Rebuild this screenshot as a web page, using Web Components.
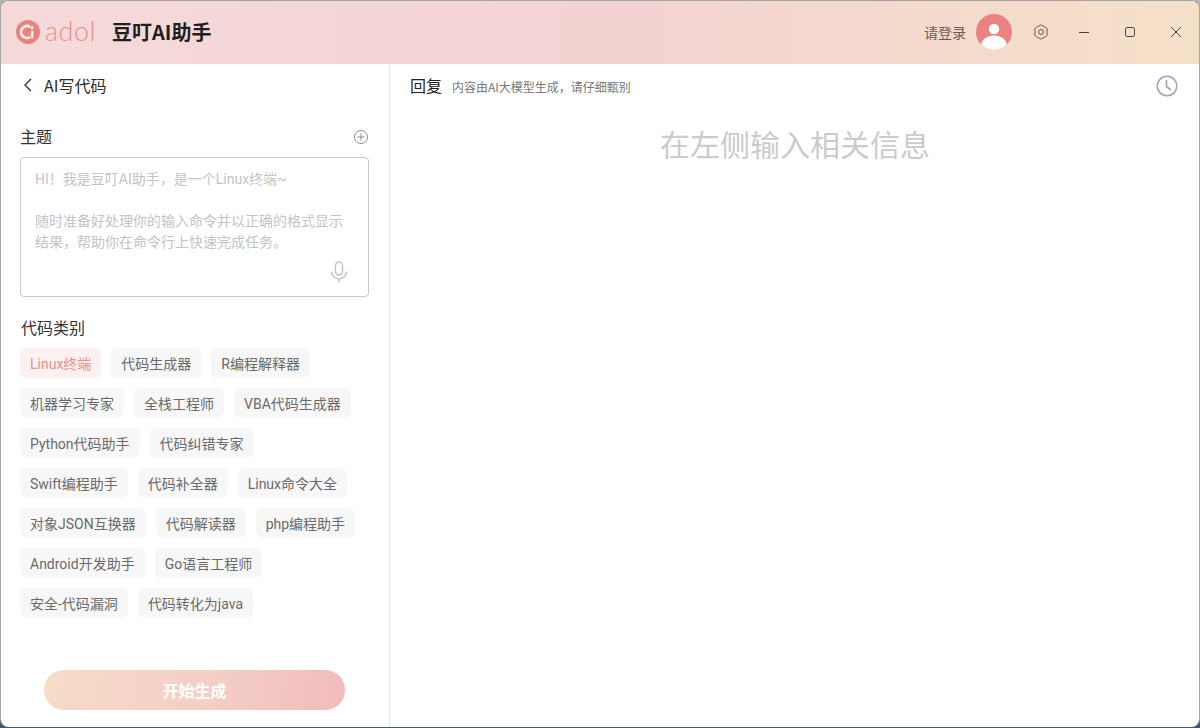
<!DOCTYPE html>
<html lang="zh">
<head>
<meta charset="utf-8">
<title>豆叮AI助手</title>
<style>
  html, body { margin: 0; padding: 0; height: 100%; overflow: hidden; }
  body { width: 1200px; height: 728px; background: #b5b5b5; font-family: "Noto Sans CJK SC", "Noto Sans", sans-serif; }
</style>
</head>
<body>
<app-window>
  <app-titlebar slot="top" app-title="豆叮AI助手" login="请登录"></app-titlebar>
  <side-panel slot="left" heading="AI写代码">
    <prompt-box label="主题">
      <p>HI！我是豆叮AI助手，是一个Linux终端~</p>
      <p>随时准备好处理你的输入命令并以正确的格式显示结果，帮助你在命令行上快速完成任务。</p>
    </prompt-box>
    <tag-group label="代码类别" tags="Linux终端,代码生成器,R编程解释器,机器学习专家,全栈工程师,VBA代码生成器,Python代码助手,代码纠错专家,Swift编程助手,代码补全器,Linux命令大全,对象JSON互换器,代码解读器,php编程助手,Android开发助手,Go语言工程师,安全-代码漏洞,代码转化为java" active="Linux终端"></tag-group>
    <start-button slot="footer">开始生成</start-button>
  </side-panel>
  <result-panel slot="right" heading="回复" note="内容由AI大模型生成，请仔细甄别" empty="在左侧输入相关信息"></result-panel>
</app-window>

<script>
class AppWindow extends HTMLElement {
  constructor() {
    super();
    this.attachShadow({ mode: "open" });
    this.shadowRoot.innerHTML = `
      <style>
        :host {
          display: block; width: 1200px; height: 728px;
          background: linear-gradient(#b5b5b5 700px, #3f5a6e 700px);
        }
        .win {
          height: 727px; box-sizing: border-box; padding: 1px 1px 0 1px;
          background: #a5a5a5; border-radius: 8px;
        }
        .inner {
          height: 726px; background: #fff; overflow: hidden;
          border-radius: 8px;
          display: flex; flex-direction: column;
        }
        .body { flex: 1; display: flex; min-height: 0; }
      </style>
      <div class="win"><div class="inner">
        <slot name="top"></slot>
        <div class="body">
          <slot name="left"></slot>
          <slot name="right"></slot>
        </div>
      </div></div>`;
  }
}

class AppTitlebar extends HTMLElement {
  constructor() {
    super();
    this.attachShadow({ mode: "open" });
  }
  connectedCallback() {
    const title = this.getAttribute("app-title") || "";
    const login = this.getAttribute("login") || "";
    this.shadowRoot.innerHTML = `
      <style>
        :host {
          display: flex; align-items: center; height: 63px; flex: none;
          box-sizing: border-box; padding-bottom: 1px;
          background: linear-gradient(90deg, #f6dadb 0%, #f3d2d2 50%, #f5e0c8 100%);
        }
        .logo { display: flex; align-items: center; margin-left: 15px; width: 96px; }
        .mark { width: 24px; height: 24px; flex: none; }
        .word {
          margin-left: 5px; font: 300 27px/24px Lato, "Noto Sans", sans-serif;
          color: #ea8f8a; letter-spacing: .5px; position: relative; top: -1px;
        }
        h1 {
          margin: 0; font: 700 20px/28px "Noto Sans CJK SC", sans-serif;
          color: #1f1f1f; white-space: nowrap;
        }
        .right { margin-left: auto; display: flex; align-items: center; }
        .login { font-size: 14px; color: #6c5a58; margin-right: 10px; }
        .avatar { width: 36px; height: 36px; display: block; }
        .btn { display: flex; align-items: center; justify-content: center; }
        .btn svg { display: block; }
        .gear { width: 16px; margin-left: 21px; }
        .min { width: 16px; margin-left: 27px; }
        .max { width: 16px; margin-left: 30px; }
        .close { width: 16px; margin-left: 30px; margin-right: 15px; }
      </style>
      <div class="logo">
        <svg class="mark" viewBox="0 0 24 24">
          <circle cx="12" cy="12" r="12" fill="#e8837d"/>
          <path d="M14 6.800A6 6 0 1 0 14 17.200" fill="none" stroke="#fbeeed" stroke-width="2.600"/>
          <rect x="14.800" y="10.500" width="2.600" height="8" rx="1.300" fill="#fbeeed"/>
          <circle cx="16.100" cy="7.600" r="1.600" fill="#fbeeed"/>
        </svg>
        <span class="word">adol</span>
      </div>
      <h1>${title}</h1>
      <div class="right">
        <span class="login">${login}</span>
        <svg class="avatar" viewBox="0 0 36 36">
          <defs><clipPath id="av"><circle cx="18" cy="18" r="18"/></clipPath></defs>
          <circle cx="18" cy="18" r="18" fill="#e9837f"/>
          <g clip-path="url(#av)" fill="#fff">
            <circle cx="18" cy="15" r="5.200"/>
            <ellipse cx="18" cy="32" rx="13" ry="10.500"/>
          </g>
        </svg>
        <span class="btn gear">
          <svg width="16" height="16" viewBox="0 0 16 16" fill="none" stroke="#6b5a55" stroke-width="1">
            <path d="M7.300 1.100Q8 .8 8.700 1.100L13.500 3.900Q14.100 4.300 14.100 5V11Q14.100 11.700 13.500 12.100L8.700 14.900Q8 15.200 7.300 14.900L2.500 12.100Q1.900 11.700 1.900 11V5Q1.900 4.300 2.500 3.900Z"/>
            <circle cx="8" cy="8" r="2.500"/>
          </svg>
        </span>
        <span class="btn min">
          <svg width="12" height="12" viewBox="0 0 12 12"><path d="M1 6.500H11" stroke="#444" stroke-width="1"/></svg>
        </span>
        <span class="btn max">
          <svg width="12" height="12" viewBox="0 0 12 12"><rect x="1.500" y="1.500" width="9" height="9" rx="1.600" fill="none" stroke="#444" stroke-width="1"/></svg>
        </span>
        <span class="btn close">
          <svg width="12" height="12" viewBox="0 0 12 12"><path d="M1 1 11 11M11 1 1 11" stroke="#444" stroke-width="1"/></svg>
        </span>
      </div>`;
  }
}

class SidePanel extends HTMLElement {
  constructor() {
    super();
    this.attachShadow({ mode: "open" });
  }
  connectedCallback() {
    this.shadowRoot.innerHTML = `
      <style>
        :host {
          display: flex; flex-direction: column; flex: none; width: 389px; box-sizing: border-box;
          border-right: 1px solid #e8e8e8; padding: 0 20px 0 19px; height: 100%;
        }
        .back { display: flex; align-items: center; height: 42px; }
        .back svg { display: block; margin-left: 3px; }
        .back span { margin-left: 11px; font-size: 16px; color: #2c2c2c; }
        .main { flex: 1; display: flex; flex-direction: column; }
        .foot { display: flex; justify-content: center; padding-bottom: 17px; }
      </style>
      <div class="back">
        <svg width="10" height="14" viewBox="0 0 10 14"><path d="M8 1 2 7 8 13" fill="none" stroke="#333" stroke-width="1.400"/></svg>
        <span>${this.getAttribute("heading") || ""}</span>
      </div>
      <div class="main"><slot></slot></div>
      <div class="foot"><slot name="footer"></slot></div>`;
  }
}

class PromptBox extends HTMLElement {
  constructor() {
    super();
    this.attachShadow({ mode: "open" });
  }
  connectedCallback() {
    this.shadowRoot.innerHTML = `
      <style>
        :host { display: block; }
        .head { display: flex; align-items: center; justify-content: space-between; height: 22px; margin-top: 19px; }
        .head span { font-size: 16px; color: #333; }
        .head svg { display: block; margin-top: 2px; }
        .box {
          position: relative; box-sizing: border-box; height: 140px; margin-top: 10px;
          border: 1px solid #c8c8c8; border-radius: 4px; padding: 11px 14px 9px;
          font: 14px/21px Roboto, "Noto Sans CJK SC", sans-serif; color: #c4c4c4;
        }
        ::slotted(p) { margin: 0 0 21px; }
        .mic { position: absolute; right: 20px; bottom: 13px; display: block; }
      </style>
      <div class="head">
        <span>${this.getAttribute("label") || ""}</span>
        <svg width="16" height="16" viewBox="0 0 16 16" fill="none" stroke="#8a8a8a" stroke-width="1">
          <circle cx="8" cy="8" r="6.500"/><path d="M8 4.500V11.500M4.500 8H11.500"/>
        </svg>
      </div>
      <div class="box">
        <slot></slot>
        <svg class="mic" width="18" height="22" viewBox="0 0 18 22" fill="none" stroke="#c4c4c4" stroke-width="1.500">
          <rect x="5.500" y="1" width="7" height="13" rx="3.500"/>
          <path d="M1.500 10.500a7.500 7.500 0 0 0 15 0M9 18v3.500" />
        </svg>
      </div>`;
  }
}

class TagChip extends HTMLElement {
  constructor() {
    super();
    this.attachShadow({ mode: "open" });
    this.shadowRoot.innerHTML = `
      <style>
        :host {
          display: block; height: 30px; padding: 0 10px; box-sizing: border-box;
          background: #f7f7f7; color: #6a6a6a; border-radius: 6px; white-space: nowrap;
          font: 14px/32px Roboto, "Noto Sans CJK SC", sans-serif;
        }
        :host([active]) { background: #fdf0f0; color: #ea8f8a; }
      </style>
      <slot></slot>`;
  }
}

class TagGroup extends HTMLElement {
  constructor() {
    super();
    this.attachShadow({ mode: "open" });
  }
  connectedCallback() {
    const active = this.getAttribute("active");
    const tags = (this.getAttribute("tags") || "").split(",");
    this.shadowRoot.innerHTML = `
      <style>
        :host { display: block; }
        .label { font-size: 16px; color: #333; line-height: 22px; margin: 19px 0 0 1px; }
        .list { display: flex; flex-wrap: wrap; gap: 10px; margin-top: 10px; width: 340px; }
      </style>
      <div class="label">${this.getAttribute("label") || ""}</div>
      <div class="list">
        ${tags.map(t => `<tag-chip ${t === active ? "active" : ""}>${t}</tag-chip>`).join("")}
      </div>`;
  }
}

class StartButton extends HTMLElement {
  constructor() {
    super();
    this.attachShadow({ mode: "open" });
    this.shadowRoot.innerHTML = `
      <style>
        :host {
          display: block; width: 301px; height: 40px; line-height: 40px; text-align: center;
          border-radius: 20px; color: #fff; font-size: 16px; font-weight: 700;
          background: linear-gradient(100deg, #f5dcc8 0%, #f4d0c8 50%, #f1bcba 100%);
        }
      </style>
      <slot></slot>`;
  }
}

class ResultPanel extends HTMLElement {
  constructor() {
    super();
    this.attachShadow({ mode: "open" });
  }
  connectedCallback() {
    this.shadowRoot.innerHTML = `
      <style>
        :host { display: block; flex: 1; padding: 0 21px 0 20px; box-sizing: border-box; }
        .head { display: flex; align-items: center; height: 42px; }
        .title { font-size: 16px; color: #222; }
        .note { font-size: 12px; color: #777; margin-left: 10px; position: relative; top: 1px; }
        .head svg { margin: 1px 0 0 auto; display: block; }
        .empty { text-align: center; font-size: 30px; line-height: 44px; color: #cbcbcb; margin-top: 15px; padding-left: 2px; }
      </style>
      <div class="head">
        <span class="title">${this.getAttribute("heading") || ""}</span>
        <span class="note">${this.getAttribute("note") || ""}</span>
        <svg width="22" height="22" viewBox="0 0 22 22" fill="none" stroke="#a6a6a6" stroke-width="1.600">
          <circle cx="11" cy="11" r="9.800"/><path d="M10.500 5V11.500L15 15"/>
        </svg>
      </div>
      <div class="empty">${this.getAttribute("empty") || ""}</div>`;
  }
}

customElements.define("app-window", AppWindow);
customElements.define("app-titlebar", AppTitlebar);
customElements.define("side-panel", SidePanel);
customElements.define("prompt-box", PromptBox);
customElements.define("tag-chip", TagChip);
customElements.define("tag-group", TagGroup);
customElements.define("start-button", StartButton);
customElements.define("result-panel", ResultPanel);
</script>
</body>
</html>
